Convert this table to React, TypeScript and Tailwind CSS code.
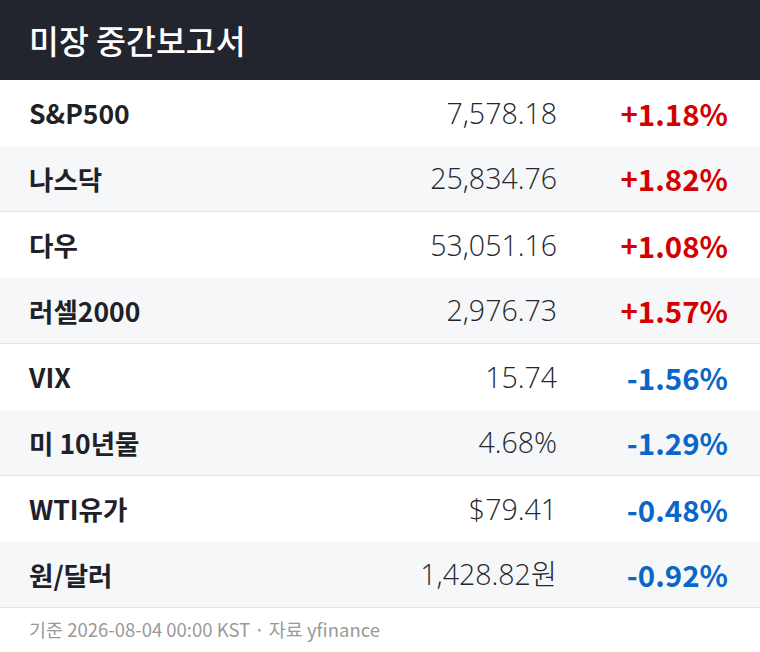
const rows = [
  { name: "S&P500", value: "7,578.18", pct: "+1.18%" },
  { name: "나스닥", value: "25,834.76", pct: "+1.82%" },
  { name: "다우", value: "53,051.16", pct: "+1.08%" },
  { name: "러셀2000", value: "2,976.73", pct: "+1.57%" },
  { name: "VIX", value: "15.74", pct: "-1.56%" },
  { name: "미 10년물", value: "4.68%", pct: "-1.29%" },
  { name: "WTI유가", value: "$79.41", pct: "-0.48%" },
  { name: "원/달러", value: "1,428.82원", pct: "-0.92%" },
];

export default function App() {
  return (
    <div
      className="w-[760px] bg-white"
      style={{ fontFamily: '"Noto Sans CJK KR", "Noto Sans", sans-serif' }}
    >
      <div className="flex h-[80px] items-center bg-[#22252d] px-[29px]">
        <h1 className="text-[32.5px] font-medium text-white">미장 중간보고서</h1>
      </div>

      {rows.map((r, i) => {
        const up = r.pct.startsWith("+");
        return (
          <div
            key={r.name}
            className={`flex h-[66px] items-center pl-[29px] pr-[32px] ${
              i % 2 === 1 ? "border-b border-[#e3e4e7] bg-[#f6f7f9]" : "bg-white"
            }`}
          >
            <div className="flex-1 text-[26.5px] font-bold text-[#1f2128]">{r.name}</div>
            <div className="text-right font-['Open_Sans','Noto_Sans_CJK_KR',sans-serif] text-[28.5px] font-light text-[#25272d]">
              {r.value}
            </div>
            <div
              className={`w-[171px] text-right text-[29.5px] font-bold ${
                up ? "text-[#d40000]" : "text-[#0a66c8]"
              }`}
            >
              {r.pct}
            </div>
          </div>
        );
      })}

      <div className="flex h-[44px] items-center px-[29px] text-[18.5px] text-[#9a9a9a]">
        기준 2026-08-04 00:00 KST · 자료 yfinance
      </div>
    </div>
  );
}
